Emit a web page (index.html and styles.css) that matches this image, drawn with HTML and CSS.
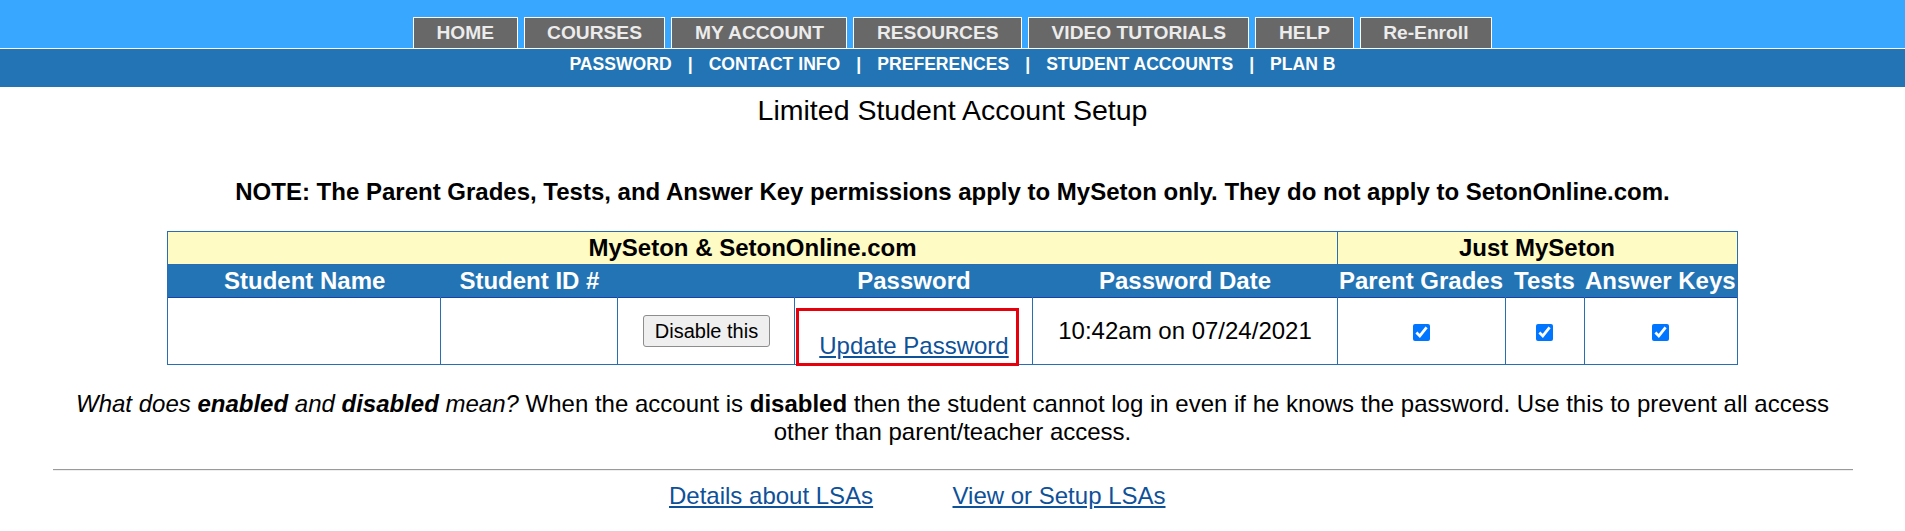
FILE: index.html
```html
<!DOCTYPE html>
<html lang="en">
<head>
<meta charset="utf-8">
<title>Limited Student Account Setup</title>
<link rel="stylesheet" href="styles.css">
</head>
<body>
<header class="topbar">
  <nav class="tabs">
    <a class="tab" href="#">HOME</a>
    <a class="tab" href="#">COURSES</a>
    <a class="tab" href="#">MY ACCOUNT</a>
    <a class="tab" href="#">RESOURCES</a>
    <a class="tab" href="#">VIDEO TUTORIALS</a>
    <a class="tab" href="#">HELP</a>
    <a class="tab" href="#">Re-Enroll</a>
  </nav>
</header>
<nav class="subnav">
  <a href="#">PASSWORD</a><span class="sep">|</span><a href="#">CONTACT INFO</a><span class="sep">|</span><a href="#">PREFERENCES</a><span class="sep">|</span><a href="#">STUDENT ACCOUNTS</a><span class="sep">|</span><a href="#">PLAN B</a>
</nav>
<main class="content">
  <h1 class="title">Limited Student Account Setup</h1>
  <p class="note">NOTE: The Parent Grades, Tests, and Answer Key permissions apply to MySeton only. They do not apply to SetonOnline.com.</p>
  <table class="lsa">
    <colgroup>
      <col class="c-name"><col class="c-id"><col class="c-dis"><col class="c-pw"><col class="c-date"><col class="c-grades"><col class="c-tests"><col class="c-keys">
    </colgroup>
    <thead>
      <tr class="group-row">
        <th colspan="5">MySeton &amp; SetonOnline.com</th>
        <th colspan="3">Just MySeton</th>
      </tr>
      <tr class="head-row">
        <th>Student Name</th>
        <th>Student ID #</th>
        <th></th>
        <th>Password</th>
        <th>Password Date</th>
        <th>Parent Grades</th>
        <th>Tests</th>
        <th>Answer Keys</th>
      </tr>
    </thead>
    <tbody>
      <tr class="data-row">
        <td></td>
        <td></td>
        <td><button class="disable-btn" type="button">Disable this</button></td>
        <td class="pw-cell"><a class="link" href="#">Update Password</a><span class="highlight"></span></td>
        <td>10:42am on 07/24/2021</td>
        <td><input class="perm" type="checkbox" checked></td>
        <td><input class="perm" type="checkbox" checked></td>
        <td><input class="perm" type="checkbox" checked></td>
      </tr>
    </tbody>
  </table>
  <p class="explain"><i>What does <b>enabled</b> and <b>disabled</b> mean?</i> When the account is <b>disabled</b> then the student cannot log in even if he knows the password. Use this to prevent all access other than parent/teacher access.</p>
  <hr class="rule">
  <div class="bottom-links">
    <div class="bl-item"><a class="link" href="#">Details about LSAs</a></div>
    <div class="bl-item"><a class="link" href="#">View or Setup LSAs</a></div>
  </div>
</main>
</body>
</html>
```
FILE: styles.css
```css
html, body {
  margin: 0;
  padding: 0;
  background: #ffffff;
}
body {
  font-family: "Liberation Sans", Arial, sans-serif;
  font-size: 24px;
  color: #000;
}

/* top tab bar */
.topbar {
  background: #38a7ff;
  height: 48px;
  box-sizing: border-box;
  padding-top: 17px;
}
.tabs {
  display: flex;
  justify-content: center;
  gap: 6px;
}
.tab {
  display: block;
  height: 31px;
  box-sizing: border-box;
  padding: 0 22.5px;
  border: 1px solid #ffffff;
  border-bottom: none;
  background: #686868;
  color: #ececec;
  font-weight: bold;
  font-size: 19.2px;
  line-height: 30px;
  text-decoration: none;
}

/* sub navigation */
.subnav {
  background: #2274b4;
  border-top: 1px solid #ffffff;
  padding: 5px 0 13px;
  line-height: 20px;
  font-size: 17.6px;
  font-weight: bold;
  text-align: center;
  color: #ffffff;
}
.subnav a {
  color: #ffffff;
  text-decoration: none;
}
.sep {
  padding: 0 16px;
}

/* main */
.content {
  display: flex;
  flex-direction: column;
  align-items: center;
}
.title {
  margin: 7px 0 0;
  font-size: 28.5px;
  font-weight: normal;
  line-height: 33px;
}
.note {
  margin: 51px 0 0;
  font-weight: bold;
  line-height: 28px;
}

/* table */
.lsa {
  margin-top: 25px;
  width: 1569px;
  table-layout: fixed;
  border-collapse: collapse;
  border: 1px solid #2a6db5;
}
.c-name { width: 273px; }
.c-id { width: 177px; }
.c-dis { width: 177px; }
.c-pw { width: 238px; }
.c-date { width: 304px; }
.c-grades { width: 168px; }
.c-tests { width: 79px; }
.c-keys { width: 153px; }

.lsa th {
  padding: 0;
  height: 32px;
  line-height: 28px;
  font-weight: bold;
  text-align: center;
  white-space: nowrap;
}
.group-row th {
  background: #fffbc5;
  border: 1px solid #2a6db5;
}
.head-row th {
  background: #2374b4;
  color: #ffffff;
  border: none;
}
.data-row td {
  height: 62px;
  padding: 0;
  border: 1px solid #2a6db5;
  border-top: 1px solid #1742aa;
  text-align: center;
  vertical-align: middle;
  line-height: 28px;
}
.data-row td.pw-cell {
  position: relative;
  vertical-align: bottom;
  padding-bottom: 4px;
}
.highlight {
  position: absolute;
  left: 1px;
  right: 13px;
  top: 10px;
  bottom: -2px;
  border: 3px solid #e6000c;
  pointer-events: none;
}
.disable-btn {
  font-family: "Liberation Sans", Arial, sans-serif;
  font-size: 20px;
  height: 32px;
  padding: 0 11px;
  border: 1px solid #8d8d8d;
  border-radius: 3px;
  background: #efefef;
  color: #000;
  vertical-align: middle;
}
.perm {
  width: 17px;
  height: 17px;
  margin: 0;
  vertical-align: middle;
  accent-color: #0075ff;
}
.link {
  color: #0e5199;
  text-decoration: underline;
}

/* explanation */
.explain {
  margin: 25px 0 0;
  width: 1800px;
  text-align: center;
  line-height: 27.6px;
}
.rule {
  margin: 24px 0 0;
  width: 1800px;
  box-sizing: border-box;
  border: 0;
  border-top: 1px solid #9a9a9a;
  border-bottom: 1px solid #eeeeee;
  height: 0;
}
.bottom-links {
  display: flex;
  justify-content: center;
  margin-top: 11px;
  line-height: 27.6px;
}
.bl-item {
  width: 283.5px;
  text-align: left;
}
```
